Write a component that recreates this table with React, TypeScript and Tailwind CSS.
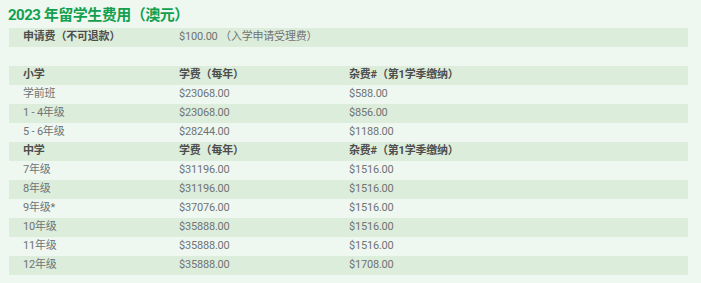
import React from "react";

type Row = { cells: string[]; head?: boolean };

const rows: Row[] = [
  { cells: ["申请费（不可退款）", "$100.00 （入学申请受理费）", ""], head: true },
  { cells: ["", "", ""] },
  { cells: ["小学", "学费（每年）", "杂费#（第1学季缴纳）"], head: true },
  { cells: ["学前班", "$23068.00", "$588.00"] },
  { cells: ["1 - 4年级", "$23068.00", "$856.00"] },
  { cells: ["5 - 6年级", "$28244.00", "$1188.00"] },
  { cells: ["中学", "学费（每年）", "杂费#（第1学季缴纳）"], head: true },
  { cells: ["7年级", "$31196.00", "$1516.00"] },
  { cells: ["8年级", "$31196.00", "$1516.00"] },
  { cells: ["9年级*", "$37076.00", "$1516.00"] },
  { cells: ["10年级", "$35888.00", "$1516.00"] },
  { cells: ["11年级", "$35888.00", "$1516.00"] },
  { cells: ["12年级", "$35888.00", "$1708.00"] },
];

export default function App() {
  return (
    <div
      className="w-[701px] h-[283px] bg-[#eef8f1] pt-[5px]"
      style={{ fontFamily: "Roboto, 'Noto Sans CJK SC', sans-serif" }}
    >
      <h2 className="pl-[8px] text-[15px] leading-[20px] font-bold text-[#13a04e] tracking-[-0.5px]">
        2023 年留学生费用（澳元）
      </h2>
      <div className="mt-[3px] ml-[9px] w-[679px] flex flex-col">
        {rows.map((r, i) => (
          <div
            key={i}
            className={
              "flex h-[19px] items-center text-[11px] tracking-[-0.2px] text-[#717374] " +
              (i % 2 === 0 ? "bg-[#ddeddb]" : "")
            }
          >
            <div className={"w-[170px] pl-[14px] " + (r.head ? "font-bold text-[#4d4d4d]" : "")}>
              {r.cells[0]}
            </div>
            <div className={"w-[170px] " + (r.head && i > 0 ? "font-bold text-[#4d4d4d]" : "")}>
              {r.cells[1]}
            </div>
            <div className={"flex-1 " + (r.head ? "font-bold text-[#4d4d4d]" : "")}>
              {r.cells[2]}
            </div>
          </div>
        ))}
      </div>
    </div>
  );
}
